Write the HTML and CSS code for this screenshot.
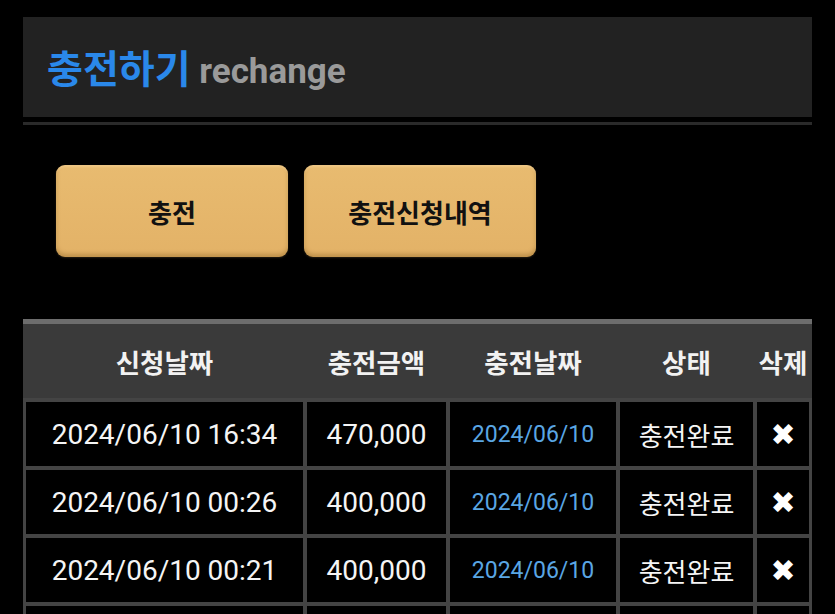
FILE: index.html
```html
<!DOCTYPE html>
<html lang="ko">
<head>
<meta charset="utf-8">
<title>충전하기</title>
<link rel="stylesheet" href="styles.css">
</head>
<body>
<div class="page">
  <div class="title-box">
    <h1 class="title"><span class="title-ko">충전하기</span> <span class="title-en">rechange</span></h1>
  </div>
  <div class="title-line"></div>

  <div class="buttons">
    <button class="btn">충전</button>
    <button class="btn">충전신청내역</button>
  </div>

  <div class="table">
    <div class="thead">
      <div class="th">신청날짜</div>
      <div class="th">충전금액</div>
      <div class="th">충전날짜</div>
      <div class="th">상태</div>
      <div class="th">삭제</div>
    </div>
    <div class="tbody">
      <div class="td">2024/06/10 16:34</div>
      <div class="td">470,000</div>
      <div class="td date">2024/06/10</div>
      <div class="td status">충전완료</div>
      <div class="td del">✖</div>

      <div class="td">2024/06/10 00:26</div>
      <div class="td">400,000</div>
      <div class="td date">2024/06/10</div>
      <div class="td status">충전완료</div>
      <div class="td del">✖</div>

      <div class="td">2024/06/10 00:21</div>
      <div class="td">400,000</div>
      <div class="td date">2024/06/10</div>
      <div class="td status">충전완료</div>
      <div class="td del">✖</div>

      <div class="td"></div>
      <div class="td"></div>
      <div class="td date"></div>
      <div class="td status"></div>
      <div class="td del"></div>
    </div>
  </div>
</div>
</body>
</html>
```

FILE: styles.css
```css
html, body {
  margin: 0;
  padding: 0;
  background: #000;
}

body {
  font-family: Roboto, "Noto Sans CJK KR", sans-serif;
  color: #fff;
  height: 614px;
  overflow: hidden;
}

.page {
  width: 789px;
  padding: 17px 0 0 23px;
}

.title-box {
  height: 100px;
  background: #222222;
  display: flex;
  align-items: center;
  padding: 2px 0 0 24px;
  box-sizing: border-box;
}

.title {
  margin: 0;
  font-size: 35px;
  font-weight: 700;
  line-height: 1;
  white-space: nowrap;
}

.title-ko {
  color: #2a88ea;
  font-family: "Noto Sans CJK KR", sans-serif;
  font-size: 39px;
}

.title-en {
  color: #9a9a9a;
  font-family: Roboto, sans-serif;
}

.title-line {
  height: 3px;
  margin-top: 5px;
  background: #2a2a2a;
}

.buttons {
  display: flex;
  gap: 16px;
  padding: 40px 0 0 33px;
}

.btn {
  width: 232px;
  height: 92px;
  border: none;
  border-radius: 9px;
  background: linear-gradient(#e8bb70, #e3b267);
  box-shadow: inset 0 -3px 4px rgba(120, 80, 20, 0.35), inset 0 2px 2px rgba(255, 230, 180, 0.35), 0 1px 2px rgba(255, 200, 120, 0.15);
  color: #111;
  font-family: "Noto Sans CJK KR", sans-serif;
  font-size: 26px;
  font-weight: 700;
  padding: 0;
  cursor: pointer;
}

.table {
  margin-top: 62px;
  width: 789px;
}

.thead,
.tbody {
  display: grid;
  grid-template-columns: 277px 139px 166px 133px 52px;
  column-gap: 4px;
  padding: 0 3px;
}

.thead {
  height: 74px;
  background: #3a3a3a;
  border-top: 5px solid #6d6d6d;
  align-items: center;
}

.th {
  text-align: center;
  font-size: 26.5px;
  font-weight: 700;
  color: #f2f2f2;
  white-space: nowrap;
}

.tbody {
  background: #444444;
  padding-top: 4px;
  row-gap: 4px;
  grid-auto-rows: 64px;
}

.td {
  background: #000;
  display: flex;
  align-items: center;
  justify-content: center;
  font-size: 28px;
  color: #f5f5f5;
  white-space: nowrap;
}

.td.date {
  font-size: 23px;
  color: #5aa6e4;
}

.td.status {
  font-size: 26px;
  font-family: "Noto Sans CJK KR", sans-serif;
}

.td.del {
  font-family: "DejaVu Sans", sans-serif;
  font-size: 30px;
  color: #fff;
}
```
